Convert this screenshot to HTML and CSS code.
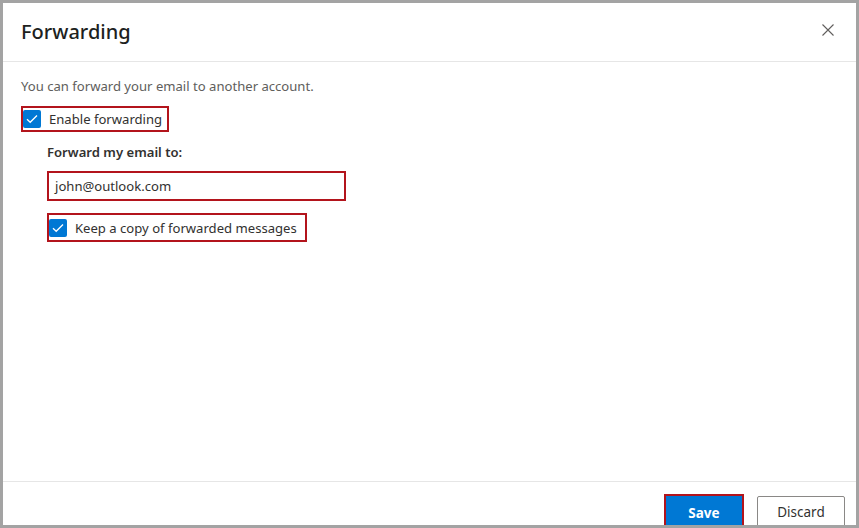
FILE: index.html
```html
<!DOCTYPE html>
<html lang="en">
<head>
<meta charset="utf-8">
<title>Forwarding</title>
<link rel="stylesheet" href="styles.css">
</head>
<body>
<div class="frame">
  <div class="dialog">
    <header class="header">
      <h1 class="title">Forwarding</h1>
      <button class="close" aria-label="Close">
        <svg width="12" height="12" viewBox="0 0 12 12"><path d="M0.5 0.5 L11.5 11.5 M11.5 0.5 L0.5 11.5" stroke="#605e5c" stroke-width="1.1" fill="none"/></svg>
      </button>
    </header>
    <main class="body">
      <p class="desc">You can forward your email to another account.</p>
      <label class="mark check-row enable">
        <span class="box"><svg width="12" height="10" viewBox="0 0 12 10"><path d="M1 5.2 L4.2 8.3 L11 1.5" stroke="#fff" stroke-width="1.3" fill="none"/></svg></span>
        <span class="check-label">Enable forwarding</span>
      </label>
      <div class="indent">
        <div class="field-label">Forward my email to:</div>
        <div class="mark input">john@outlook.com</div>
        <label class="mark check-row keep">
          <span class="box"><svg width="12" height="10" viewBox="0 0 12 10"><path d="M1 5.2 L4.2 8.3 L11 1.5" stroke="#fff" stroke-width="1.3" fill="none"/></svg></span>
          <span class="check-label">Keep a copy of forwarded messages</span>
        </label>
      </div>
    </main>
    <footer class="footer">
      <button class="btn save">Save</button>
      <button class="btn discard">Discard</button>
    </footer>
  </div>
</div>
</body>
</html>
```
FILE: styles.css
```css
* { box-sizing: border-box; }
html, body { margin: 0; padding: 0; }
body {
  width: 859px;
  height: 528px;
  overflow: hidden;
  background: #a3a3a3;
  font-family: "Noto Sans", "Open Sans", sans-serif;
  color: #323130;
}
.frame {
  padding: 3px 3px 3px 3px;
  height: 528px;
}
.dialog {
  background: #fff;
  height: 522px;
  overflow: hidden;
  display: flex;
  flex-direction: column;
}
.header {
  height: 59px;
  flex: none;
  border-bottom: 1px solid #e6e6e6;
  display: flex;
  align-items: center;
  justify-content: space-between;
  padding: 0 22px 0 18px;
}
.title {
  margin: 0;
  font-size: 20px;
  font-weight: 500;
  color: #201f1e;
  position: relative;
  top: -1px;
}
.close {
  border: 0;
  background: none;
  padding: 0;
  width: 12px;
  height: 12px;
  display: flex;
  position: relative;
  top: -2px;
}
.body {
  flex: 1;
  padding: 14px 18px 0 18px;
}
.desc {
  margin: 0;
  font-size: 13.1px;
  line-height: 20px;
  color: #605e5c;
}
.mark { border: 2px solid #b3141c; }
.check-row {
  display: inline-flex;
  align-items: center;
  gap: 8px;
  font-size: 13.1px;
}
.enable {
  margin-top: 10px;
  height: 26px;
  padding: 0 5px 0 0;
}
.box {
  width: 18px;
  height: 18px;
  border-radius: 2px;
  background: #0078d4;
  display: flex;
  align-items: center;
  justify-content: center;
}
.indent {
  padding-left: 26px;
  display: flex;
  flex-direction: column;
  align-items: flex-start;
}
.field-label {
  margin-top: 10px;
  font-size: 13.1px;
  font-weight: 600;
  line-height: 20px;
}
.input {
  margin-top: 9px;
  width: 299px;
  height: 30px;
  padding: 0 6px;
  font-size: 13.1px;
  display: flex;
  align-items: center;
}
.keep {
  margin-top: 12px;
  height: 29px;
  padding: 0 8px 0 0;
}
.footer {
  flex: none;
  height: 44px;
  border-top: 1px solid #e6e6e6;
  display: flex;
  justify-content: flex-end;
  align-items: flex-start;
  gap: 13px;
  padding: 14px 11px 0 0;
}
.btn {
  height: 32px;
  font-family: "Noto Sans", "Open Sans", sans-serif;
  font-size: 13.5px;
  border-radius: 2px;
  padding: 0;
}
.save {
  width: 80px;
  background: #0078d4;
  color: #fff;
  font-weight: 700;
  border: 2px solid #b3141c;
  border-radius: 0;
  margin-top: -2px;
  height: 36px;
  padding-top: 2px;
}
.discard {
  width: 88px;
  background: #fff;
  color: #323130;
  border: 1px solid #8a8886;
  font-weight: 400;
}
```
